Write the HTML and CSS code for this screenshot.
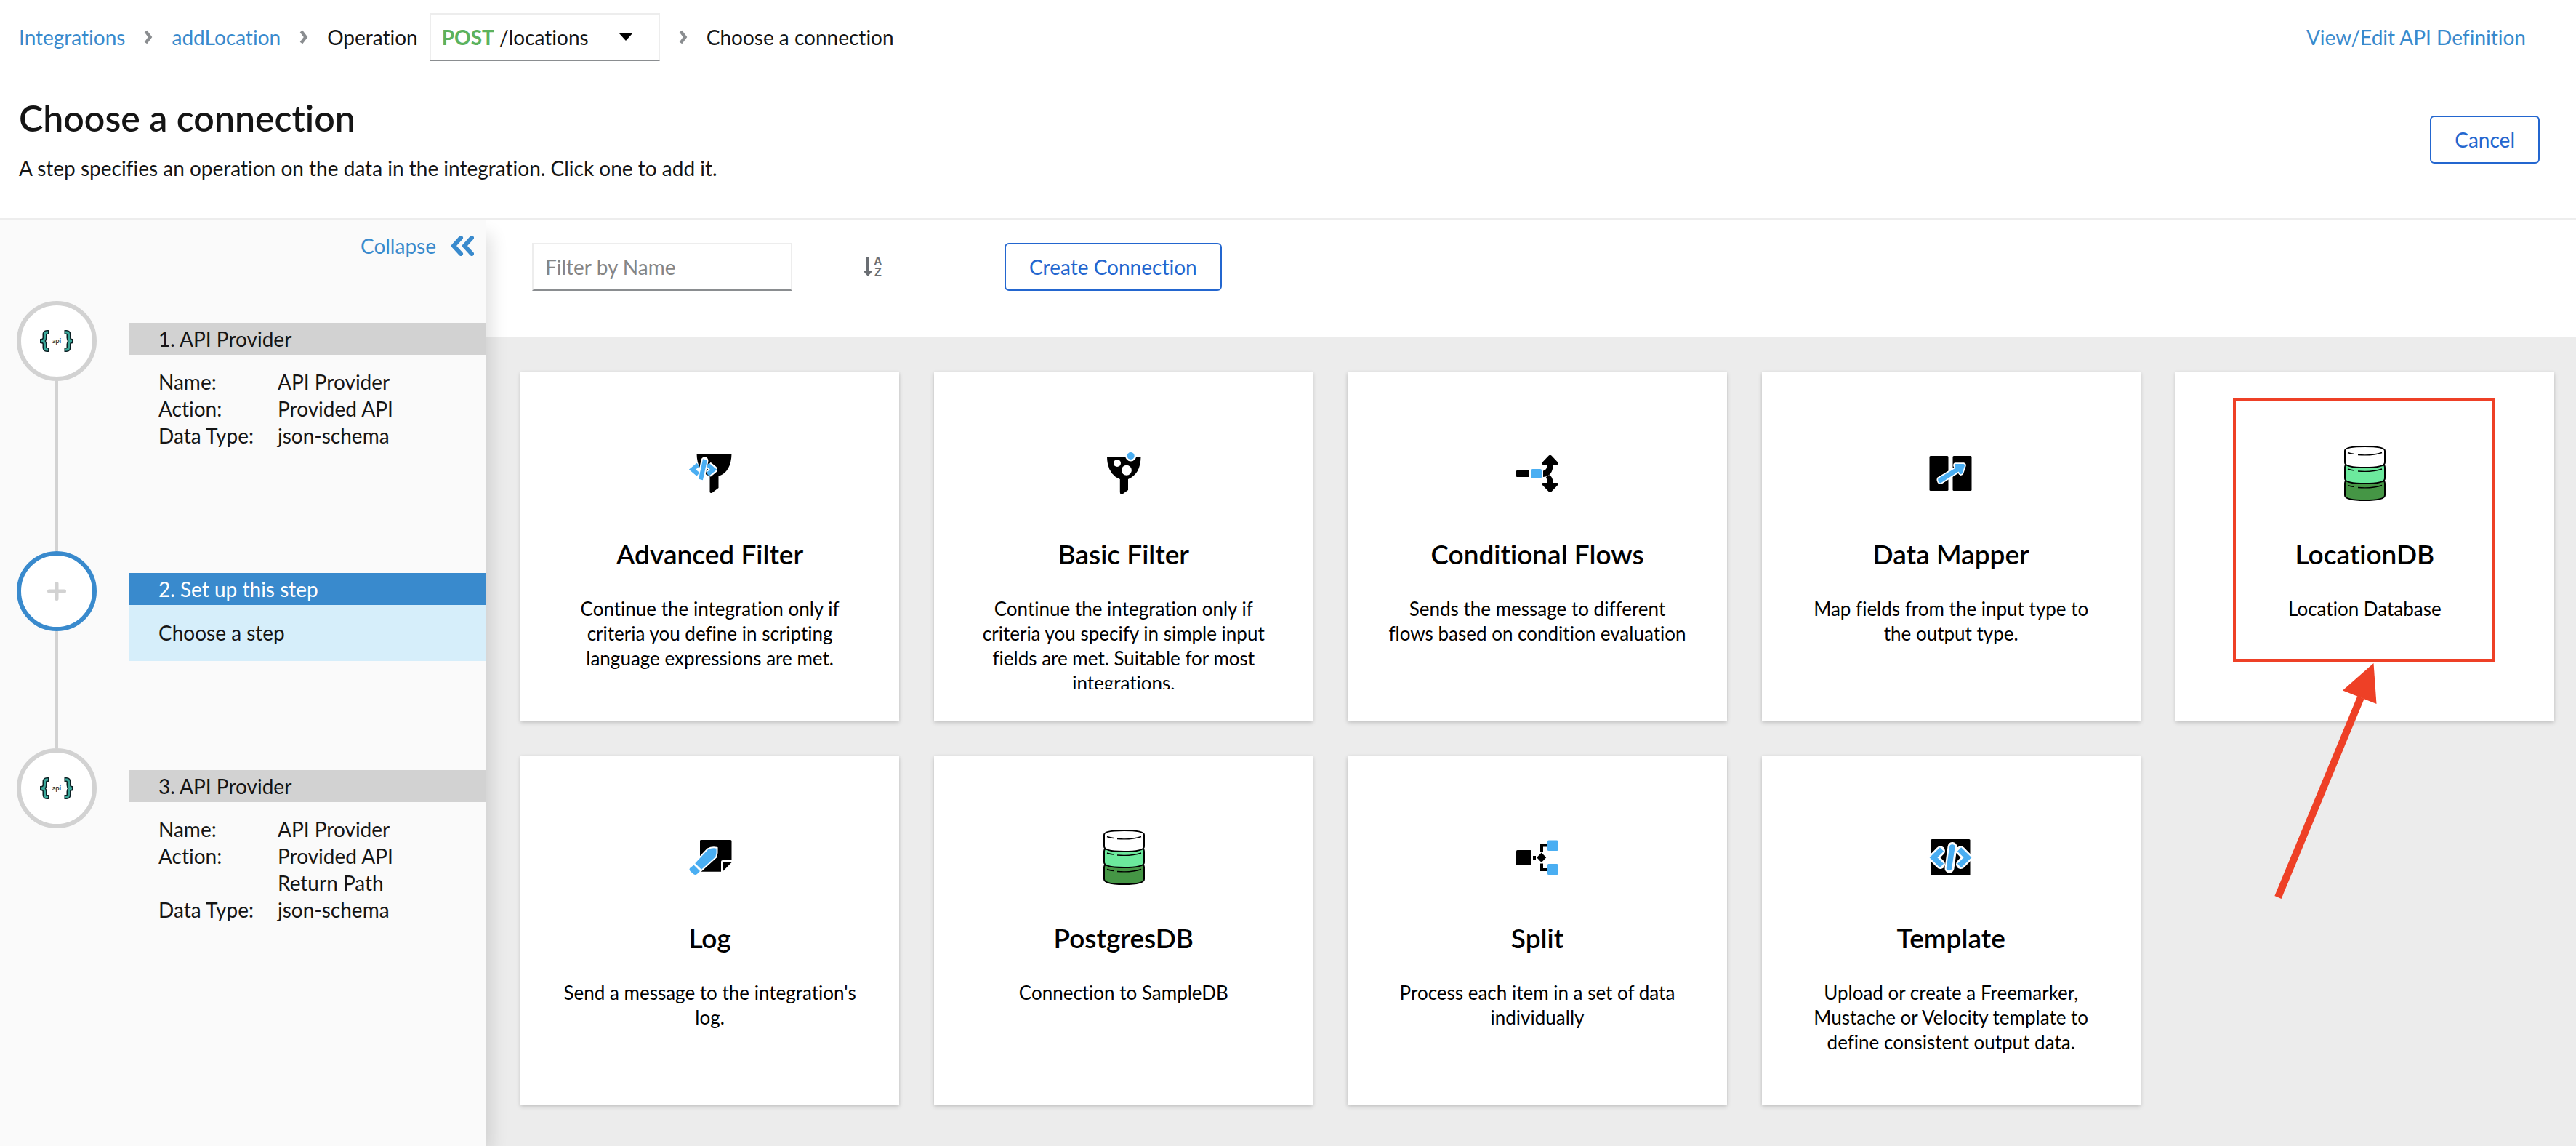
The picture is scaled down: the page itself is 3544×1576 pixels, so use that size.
FILE: index.html
```html
<!DOCTYPE html>
<html lang="en">
<head>
<meta charset="utf-8">
<meta name="viewport" content="width=device-width, initial-scale=1">
<title>Choose a connection</title>
<link rel="stylesheet" href="styles.css">
</head>
<body>
<svg class="defs" aria-hidden="true">
  <symbol id="chevron" viewBox="0 0 12 20"><path d="M2.500 2 8.500 10l-6 8" fill="none" stroke="#8a8d90" stroke-width="4.500"/></symbol>
  <symbol id="braces" viewBox="0 0 48 30">
    <g fill="none" stroke="#0b1f23" stroke-width="6"><path d="M13.500 3H10.500Q7.500 3 7.500 6.500V10.500Q7.500 15 1 15Q7.500 15 7.500 19.500V23.500Q7.500 27 10.500 27H13.500"/><path d="M34.500 3h3q3 0 3 3.500V10.500q0 4.500 6.500 4.500q-6.500 0-6.500 4.500v4q0 3.500-3 3.500h-3"/></g>
    <g fill="none" stroke="#3aa89a" stroke-width="3"><path d="M12 3H10.500Q7.500 3 7.500 6.500V10.500Q7.500 15 3 15Q7.500 15 7.500 19.500V23.500Q7.500 27 10.500 27H12"/><path d="M36 3h1.500q3 0 3 3.500V10.500q0 4.500 4.500 4.500q-4.500 0-4.500 4.500v4q0 3.500-3 3.500h-1.500"/></g>
  </symbol>
  <symbol id="database" viewBox="0 0 80 80">
    <g stroke="#000" stroke-width="2" stroke-linejoin="round">
      <path fill="#459645" d="M13 54Q13 50 17 49H64Q68 50 68 54V70Q68 77 40.500 77Q13 77 13 70Z"/>
      <path fill="#6cea9d" d="M13 32Q13 28 17 27H64Q68 28 68 32V47Q68 54 40.500 54Q13 54 13 47Z"/>
      <path fill="#fff" d="M13 9Q13 3 40.500 3Q68 3 68 9V25Q68 32 40.500 32Q13 32 13 25Z"/>
    </g>
    <g fill="none" stroke="#000" stroke-width="1.500"><path d="M17 11.500q4 1.500 9 2M31 14.500q20 1.500 33-3M17 34q4 1.500 9 2M31 37q20 1.500 33-3M17 56.500q4 1.500 9 2M31 59.500q20 1.500 33-3"/></g>
  </symbol>
</svg>

<header class="page-head">
  <div class="crumb-row">
    <nav class="crumbs" aria-label="Breadcrumb">
      <a href="#integrations">Integrations</a>
      <svg class="chevron" aria-hidden="true"><use href="#chevron"/></svg>
      <a href="#add-location">addLocation</a>
      <svg class="chevron" aria-hidden="true"><use href="#chevron"/></svg>
      <div class="operation">
        <span id="operation-label">Operation</span>
        <button class="operation-toggle" type="button" aria-haspopup="listbox" aria-labelledby="operation-label operation-value">
          <span id="operation-value"><strong>POST</strong> /locations</span>
          <svg class="caret" viewBox="0 0 18 10" aria-hidden="true"><path d="M0 0h18l-9 10z"/></svg>
        </button>
      </div>
      <svg class="chevron" aria-hidden="true"><use href="#chevron"/></svg>
      <span>Choose a connection</span>
    </nav>
    <a href="#definition">View/Edit API Definition</a>
  </div>
  <div class="title-row">
    <div>
      <h1>Choose a connection</h1>
      <p>A step specifies an operation on the data in the integration. Click one to add it.</p>
    </div>
    <button class="btn" type="button">Cancel</button>
  </div>
</header>

<div class="layout">
  <aside class="sidebar">
    <button class="collapse" type="button">Collapse
      <svg viewBox="0 0 32 28" aria-hidden="true"><path d="M14 3 4 14l10 11M29 3 19 14l10 11" fill="none" stroke="currentColor" stroke-width="6" stroke-linejoin="round" stroke-linecap="round"/></svg>
    </button>
    <ol class="steps">
      <li class="step">
        <div class="track"><span class="dot"><svg class="api-icon" viewBox="0 0 48 30" aria-hidden="true"><use href="#braces"/><text x="24" y="18" text-anchor="middle">api</text></svg></span></div>
        <div class="step-main">
          <h2>1. API Provider</h2>
          <dl>
            <dt>Name:</dt><dd>API Provider</dd>
            <dt>Action:</dt><dd>Provided API</dd>
            <dt>Data Type:</dt><dd>json-schema</dd>
          </dl>
        </div>
      </li>
      <li class="step active">
        <div class="track"><span class="dot"><svg class="plus" viewBox="0 0 26 26" aria-hidden="true"><path d="M13 2.500v21M2.500 13h21" stroke="#d2d2d2" stroke-width="5" stroke-linecap="round"/></svg></span></div>
        <div class="step-main">
          <h2>2. Set up this step</h2>
          <p>Choose a step</p>
        </div>
      </li>
      <li class="step">
        <div class="track"><span class="dot"><svg class="api-icon" viewBox="0 0 48 30" aria-hidden="true"><use href="#braces"/><text x="24" y="18" text-anchor="middle">api</text></svg></span></div>
        <div class="step-main">
          <h2>3. API Provider</h2>
          <dl>
            <dt>Name:</dt><dd>API Provider</dd>
            <dt>Action:</dt><dd>Provided API Return Path</dd>
            <dt>Data Type:</dt><dd>json-schema</dd>
          </dl>
        </div>
      </li>
    </ol>
  </aside>

  <main class="content">
    <form class="toolbar">
      <input class="filter" type="text" placeholder="Filter by Name" aria-label="Filter by Name">
      <button class="sort" type="button" aria-label="Sort by name">
        <svg viewBox="0 0 26 28" aria-hidden="true"><path d="M4 1h4v18h5L6 27-1 19h5z"/><text x="14" y="12">A</text><text x="15" y="27">Z</text></svg>
      </button>
      <button class="btn" type="button">Create Connection</button>
    </form>

    <div class="cards">
      <a class="card" href="#advanced-filter">
        <svg class="icon" viewBox="0 0 80 80" aria-hidden="true">
          <path d="M21.500 13H69.500Q69 38 51.500 44V60L43 66.500Q39.500 68 39.500 65V44Q22 38 21.500 13Z"/>
          <g fill="none" stroke="#fff" stroke-width="10" stroke-linejoin="round"><path stroke-linecap="round" d="M32.500 22.500 27.500 47"/><path d="M22.500 28.500 15 34.700l7.500 6.300M37.500 28.500l7.500 6.200-7.500 6.300"/></g>
          <g fill="none" stroke="#4aaef2" stroke-width="6"><path d="M33 21 27 48.500"/><path d="M23.500 28 15.500 34.700l8 6.700M36.500 28l8 6.700-8 6.700"/></g>
        </svg>
        <h3>Advanced Filter</h3>
        <p>Continue the integration only if criteria you define in scripting language expressions are met.</p>
      </a>
      <a class="card" href="#basic-filter">
        <svg class="icon" viewBox="0 0 80 80" aria-hidden="true">
          <path d="M17 17.500H63.500Q63 41 46 48V63L39 68Q34.800 70 34.800 66V48Q17.500 41 17 17.500Z"/>
          <g fill="#fff"><circle cx="31" cy="26" r="5"/><circle cx="43.900" cy="35.700" r="7"/><circle cx="49.700" cy="16" r="7.500"/></g>
          <circle cx="49.700" cy="16" r="5" fill="#4aaef2"/>
        </svg>
        <h3>Basic Filter</h3>
        <p>Continue the integration only if criteria you specify in simple input fields are met. Suitable for most integrations.</p>
      </a>
      <a class="card" href="#conditional-flows">
        <svg class="icon" viewBox="0 0 80 80" aria-hidden="true">
          <rect x="11" y="36" width="18" height="9" rx="1"/>
          <rect x="31.500" y="34" width="14.500" height="13" rx="2" fill="#4aaef2"/>
          <path d="M57.600 66q-1.500 0-3-2L47 56q-2-3 1-3h5.600q0-5-1.600-8l5-3q5 5 4.600 11h5.600q3 0 1 3l-7.600 8q-1.500 2-3 2z"/>
          <path d="M57.600 14.700q1.500 0 3 2l7.600 8q2 3.300-1 3.300h-5.600Q61.500 44 48 45V36.500Q53.500 35.500 53.600 28H48q-3 0-1-3.300l7.600-8q1.500-2 3-2z"/>
        </svg>
        <h3>Conditional Flows</h3>
        <p>Sends the message to different flows based on condition evaluation</p>
      </a>
      <a class="card" href="#data-mapper">
        <svg class="icon" viewBox="0 0 80 80" aria-hidden="true">
          <rect x="10.500" y="16" width="26" height="48" rx="1.500"/><rect x="42.500" y="16" width="26" height="48" rx="1.500"/>
          <path fill="#4aaef2" stroke="#fff" stroke-width="3.500" stroke-linejoin="round" paint-order="stroke" d="M22.500 47 46.500 32.500l-1.500-3q-.5-2.500 1.500-2.500h11q2 .5 1.500 2.500l-3.500 10.500q-1.500 2-3 .5l-2-3L26.500 53q-2 1-3.500-1.500t-.5-4.500z"/>
        </svg>
        <h3>Data Mapper</h3>
        <p>Map fields from the input type to the output type.</p>
      </a>
      <a class="card" href="#location-db">
        <svg class="icon" aria-hidden="true"><use href="#database"/></svg>
        <h3>LocationDB</h3>
        <p>Location Database</p>
        <span class="callout-box"></span>
        <svg class="callout-arrow" viewBox="0 0 156 347" aria-hidden="true"><path d="M10 329 124 54" stroke="#ee4026" stroke-width="10" fill="none"/><path d="M141.500 7 99 44.500l46.500 18.500z" fill="#ee4026"/></svg>
      </a>
      <a class="card" href="#log">
        <svg class="icon" viewBox="0 0 80 80" aria-hidden="true">
          <path d="M27 16H68q1.500 0 1.500 1.500V44H57q-2 0-2 2V59.700H26V18q0-2 1-2zM57 47H69.500L57 59.700z"/>
          <path fill="#4aaef2" stroke="#fff" stroke-width="4" paint-order="stroke" d="M19.200 48.300 37 29.300q6-3 11.600-1.600.5 6-1.200 11.500L28 56.700z"/>
          <path fill="#4aaef2" stroke="#fff" stroke-width="3" paint-order="stroke" d="M17.500 50.500 26 59l-4 4q-2.500 2-5 0l-4.500-4q-2-2-.5-4z"/>
        </svg>
        <h3>Log</h3>
        <p>Send a message to the integration's log.</p>
      </a>
      <a class="card" href="#postgres-db">
        <svg class="icon" aria-hidden="true"><use href="#database"/></svg>
        <h3>PostgresDB</h3>
        <p>Connection to SampleDB</p>
      </a>
      <a class="card" href="#split">
        <svg class="icon" viewBox="0 0 80 80" aria-hidden="true">
          <rect x="11" y="30" width="21" height="21" rx="1.500"/>
          <path d="M34 38h4v5h-4zM45.700 33.500l6.500 6.700-6.500 6.700-6.500-6.700z"/>
          <path fill="none" stroke="#000" stroke-width="4" d="M46 32V23.500h8M46 48.500V57h8"/>
          <g fill="#4aaef2"><rect x="54" y="16.500" width="14.500" height="14.500" rx="1.500"/><rect x="54" y="49" width="14.500" height="15" rx="1.500"/></g>
        </svg>
        <h3>Split</h3>
        <p>Process each item in a set of data individually</p>
      </a>
      <a class="card" href="#template">
        <svg class="icon" viewBox="0 0 80 80" aria-hidden="true">
          <rect x="12.500" y="15" width="54" height="50" rx="1.500"/>
          <g fill="none" stroke="#fff" stroke-width="13" stroke-linejoin="round" stroke-linecap="round"><path d="M42 25.500 38 55M25.500 31l-9 9.200 9 9.300M53.500 31l9 9.200-9 9.300"/></g>
          <g fill="none" stroke="#4aaef2" stroke-width="7.500" stroke-linecap="round"><path d="M41.800 26 37.500 54.500"/><path stroke-linecap="butt" d="M27.500 29 16 40.200l11.500 11.300M51.500 29 63 40.200 51.500 51.500"/></g>
        </svg>
        <h3>Template</h3>
        <p>Upload or create a Freemarker, Mustache or Velocity template to define consistent output data.</p>
      </a>
    </div>
  </main>
</div>
</body>
</html>
```

FILE: styles.css
```css
*, *::before, *::after { box-sizing: border-box; }

body {
  margin: 0;
  min-height: 100vh;
  display: flex;
  flex-direction: column;
  background: #fff;
  color: #151515;
  font-family: Lato, "Open Sans", sans-serif;
  font-size: 28px;
  line-height: 42px;
  font-variant-ligatures: none;
}

h1, h2, h3, p, dl, dd, ol { margin: 0; padding: 0; font-weight: 400; }
a { color: #398acd; text-decoration: none; }
button, input { font: inherit; color: inherit; font-variant-ligatures: none; }
button { cursor: pointer; }
svg { display: block; flex: none; }
.defs { position: absolute; width: 0; height: 0; }

.btn {
  height: 66px;
  padding: 0 32px;
  border: 2px solid #2366cf;
  border-radius: 6px;
  background: #fff;
  color: #2366cf;
}

/* Header */
.page-head {
  padding: 18px 50px 48px 26px;
  border-bottom: 2px solid #ededed;
}
.crumb-row {
  display: flex;
  justify-content: space-between;
  align-items: center;
  padding-right: 19px;
}
.crumbs { display: flex; align-items: center; gap: 26px; }
.chevron { width: 12px; height: 20px; }
.operation { display: flex; align-items: center; gap: 16px; }
.operation-toggle {
  display: flex;
  align-items: center;
  justify-content: space-between;
  width: 317px;
  height: 66px;
  padding: 0 36px 0 15px;
  border: 2px solid #ededed;
  border-bottom-color: #8a8d90;
  background: #fff;
}
.operation-toggle strong { color: #5cb25d; }
.caret { width: 18px; height: 10px; }
.title-row {
  display: flex;
  justify-content: space-between;
  align-items: center;
  margin-top: 48px;
}
h1 {
  margin-bottom: 18px;
  font-size: 50px;
  line-height: 60px;
  font-weight: 600;
}

/* Layout */
.layout { flex: 1; display: flex; }
.sidebar {
  position: relative;
  z-index: 1;
  flex: none;
  width: 668px;
  padding-top: 16px;
  background: #fafafa;
  box-shadow: 14px 14px 22px -6px rgba(0, 0, 0, 0.12);
  clip-path: inset(0 -40px 0 0);
}
.content { flex: 1; display: flex; flex-direction: column; min-width: 0; }

/* Integration steps */
.collapse {
  display: flex;
  align-items: center;
  gap: 20px;
  height: 40px;
  margin-left: auto;
  padding: 0 16px 0 0;
  border: 0;
  background: none;
  color: #398acd;
}
.collapse svg { width: 32px; height: 28px; }
.steps { margin-top: 56px; padding-left: 23px; list-style: none; }
.step { display: flex; gap: 45px; }
.track {
  flex: none;
  display: flex;
  flex-direction: column;
  align-items: center;
  width: 110px;
}
.step:not(:last-child) .track::after {
  content: "";
  flex: 1;
  width: 4px;
  background: #d2d2d2;
}
.dot {
  display: flex;
  align-items: center;
  justify-content: center;
  width: 110px;
  height: 110px;
  border: 6px solid #d2d2d2;
  border-radius: 50%;
  background: #fff;
}
.api-icon { width: 48px; height: 30px; overflow: visible; }
.api-icon text { font: 700 9px Lato, sans-serif; fill: #333; }
.plus { width: 26px; height: 26px; }
.step-main { flex: 1; padding: 30px 0 120px; line-height: 37px; }
.step-main h2 {
  padding-left: 40px;
  background: #d2d2d2;
  font-size: 28px;
  line-height: 44px;
}
.step-main dl {
  display: grid;
  grid-template-columns: 164px 1fr;
  padding: 19px 40px 20px;
}
.step-main p { padding: 20px 40px; background: #d6eefa; }
.active .dot { border-color: #398acd; }
.active h2 { background: #398acd; color: #fff; }

/* Toolbar */
.toolbar {
  display: flex;
  align-items: center;
  padding: 32px 64px 64px;
}
.filter {
  width: 358px;
  height: 66px;
  padding: 0 16px;
  border: 2px solid #ededed;
  border-bottom-color: #8a8d90;
  background: #fff;
}
.filter::placeholder { color: #858585; opacity: 1; }
.sort {
  margin: 0 152px 0 82px;
  padding: 16px;
  border: 0;
  background: none;
}
.sort svg { width: 26px; height: 28px; overflow: visible; fill: #6a6e73; }
.sort text { font: 700 16px "Liberation Sans", sans-serif; }

/* Connection cards */
.cards {
  flex: 1;
  display: grid;
  grid-template-columns: repeat(5, 1fr);
  align-content: start;
  gap: 48px;
  padding: 48px 30px 48px 48px;
  background: #ececec;
}
.card {
  position: relative;
  display: flex;
  flex-direction: column;
  align-items: center;
  padding: 99px 52px 44px;
  background: #fff;
  box-shadow: 0 2px 6px rgba(0, 0, 0, 0.16), 0 0 4px rgba(0, 0, 0, 0.06);
  color: #000;
  text-align: center;
}
.icon { width: 80px; height: 80px; }
.card h3 {
  margin: 49px 0 36px;
  font-size: 37px;
  line-height: 44px;
  font-weight: 600;
}
.card p {
  height: 128px;
  overflow: hidden;
  font-size: 26px;
  line-height: 34px;
}

/* Callout drawn over the recommended connection */
.callout-box {
  position: absolute;
  top: 35px;
  left: 79px;
  right: 81px;
  height: 363px;
  border: 4px solid #ee4026;
}
.callout-arrow {
  position: absolute;
  top: 393px;
  left: 131px;
  width: 156px;
  height: 347px;
}
```
